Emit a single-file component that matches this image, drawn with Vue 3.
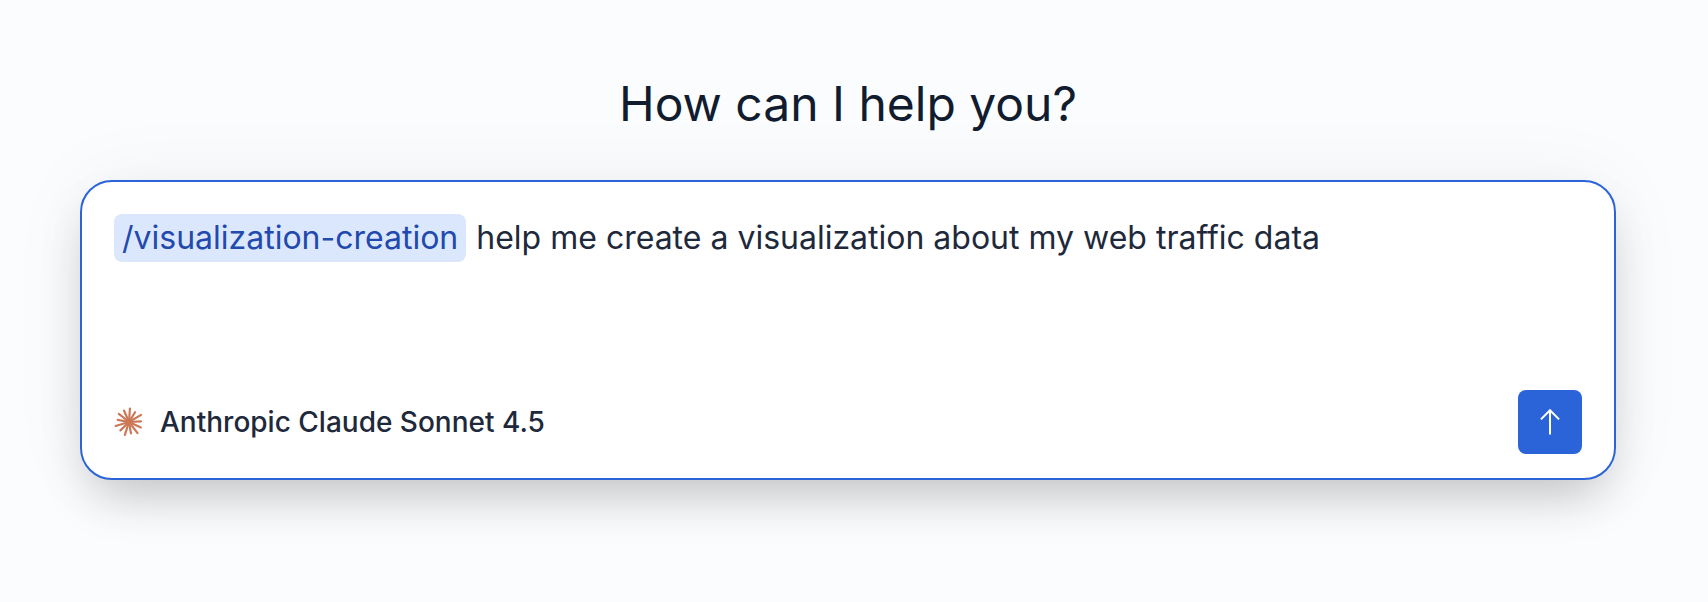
<script setup>
const rays = Array.from({ length: 13 }, (_, i) => ({
  angle: (360 / 13) * i + 4,
  length: [13.5, 11.5, 14, 12, 13, 14, 11.5, 13.5, 12, 14, 11.5, 13, 12.5][i],
}))
</script>

<template>
  <main class="page">
    <h1 class="title">How can I help you?</h1>
    <section class="card">
      <div class="prompt">
        <span class="command">/visualization-creation</span>
        <span class="message">help me create a visualization about my web traffic data</span>
      </div>
      <div class="footer">
        <div class="model">
          <svg class="spark" viewBox="-15 -15 30 30" aria-hidden="true">
            <line
              v-for="ray in rays"
              :key="ray.angle"
              x1="0"
              y1="0"
              x2="0"
              :y2="-ray.length"
              :transform="`rotate(${ray.angle})`"
            />
          </svg>
          <span class="model-name">Anthropic Claude Sonnet 4.5</span>
        </div>
        <button class="send" type="button" aria-label="Send">
          <svg viewBox="0 0 24 24" aria-hidden="true">
            <path d="M12 21.4V3M5.2 10 12 3.2l6.8 6.8" />
          </svg>
        </button>
      </div>
    </section>
  </main>
</template>

<style>
html,
body {
  margin: 0;
  background: #fbfcfe;
}
</style>

<style scoped>
.page {
  box-sizing: border-box;
  width: 1708px;
  height: 602px;
  padding: 0 92px 0 80px;
  overflow: hidden;
  background: #fbfcfe;
  font-family: Inter, "Liberation Sans", sans-serif;
}
.title {
  margin: 0;
  padding-top: 72px;
  height: 180px;
  box-sizing: border-box;
  font-size: 48px;
  line-height: 64px;
  font-weight: 400;
  color: #111c2e;
  text-align: center;
}
.card {
  box-sizing: border-box;
  display: flex;
  flex-direction: column;
  justify-content: space-between;
  width: 1536px;
  height: 300px;
  padding: 32px 32px 24px;
  border: 2px solid #2b64d9;
  border-radius: 32px;
  background: #fff;
  box-shadow: 0 25px 50px -12px rgba(0, 0, 0, 0.22), 0 0 80px rgba(15, 23, 42, 0.05);
}
.prompt {
  display: flex;
  align-items: center;
  gap: 10px;
  font-size: 32px;
  line-height: 48px;
  color: #1e293b;
}
.command {
  padding: 0 8px;
  border-radius: 8px;
  background: #dbe7fd;
  color: #2249ad;
}
.footer {
  display: flex;
  align-items: center;
  justify-content: space-between;
}
.model {
  display: flex;
  align-items: center;
  gap: 16px;
}
.spark {
  width: 30px;
  height: 30px;
  stroke: #cc7857;
  stroke-width: 2.2;
  stroke-linecap: round;
}
.model-name {
  font-size: 28px;
  font-weight: 500;
  color: #1e293b;
}
.send {
  display: flex;
  align-items: center;
  justify-content: center;
  width: 64px;
  height: 64px;
  padding: 0;
  border: 0;
  border-radius: 8px;
  background: #2b64d9;
}
.send svg {
  width: 32px;
  height: 32px;
  fill: none;
  stroke: #fff;
  stroke-width: 1.5;
}
</style>
